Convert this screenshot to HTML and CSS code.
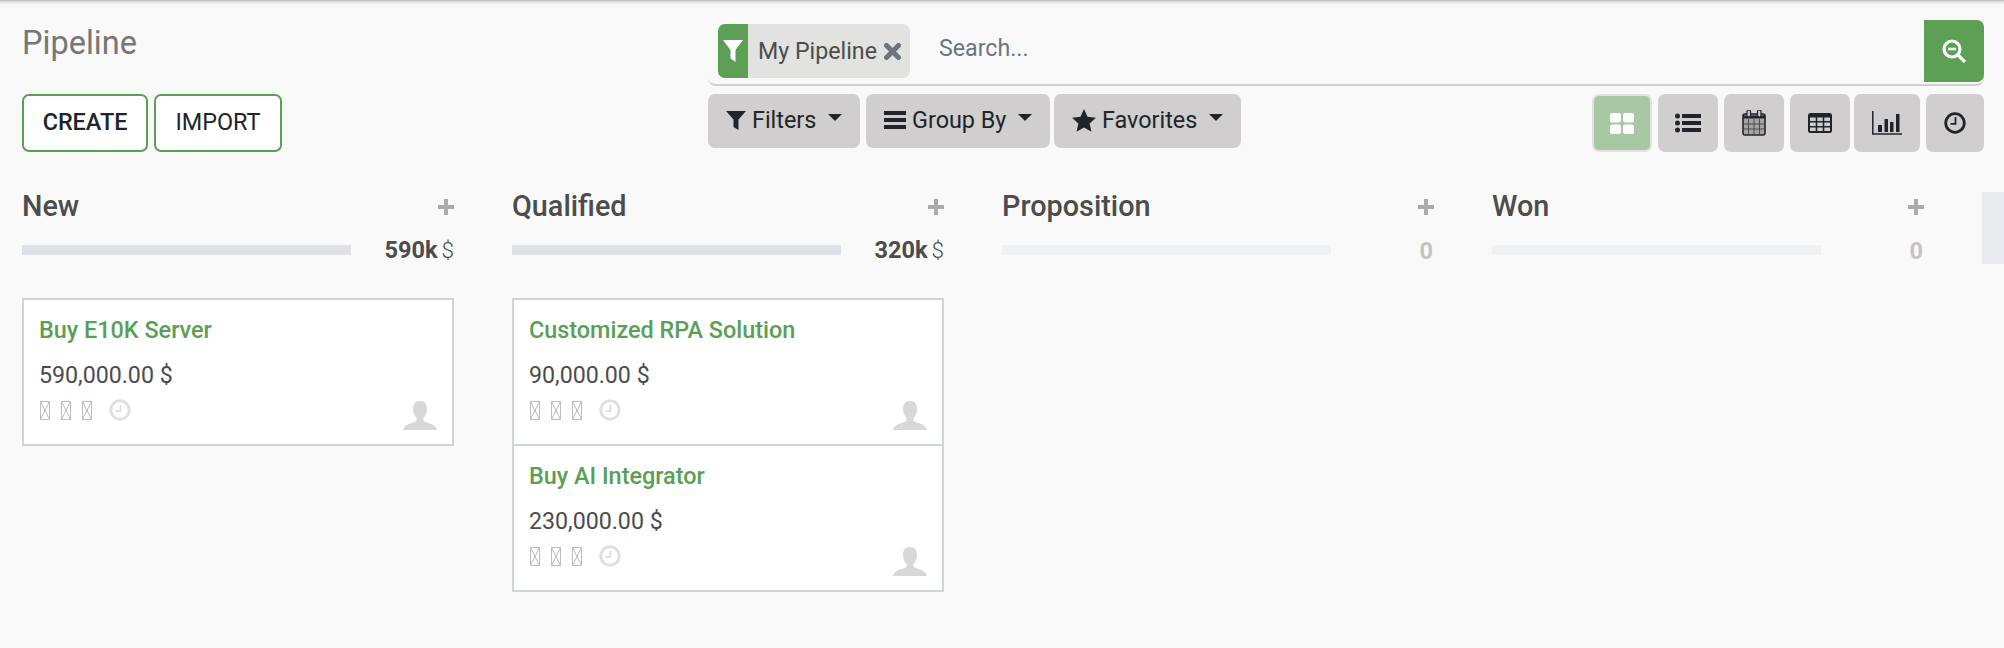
FILE: index.html
```html
<!doctype html>
<html>
    <head>
        <meta charset="utf-8">
        <title>Pipeline</title>
        <link rel="stylesheet" href="styles.css">
    </head>
    <body>
      <svg class="defs" width="0" height="0">
        <symbol id="tofu" viewBox="0 0 10 19">
          <path d="M.5.5h9v18h-9zM.5.5l9 18M9.5.5l-9 18" fill="none" stroke="currentColor" stroke-width="1"/>
        </symbol>
        <symbol id="clock" viewBox="0 0 22 22">
          <circle cx="11" cy="11" r="9.2" fill="none" stroke="currentColor" stroke-width="3"/>
          <path d="M11.5 5.5v6.5h-5" fill="none" stroke="currentColor" stroke-width="1.8"/>
        </symbol>
        <symbol id="person" viewBox="0 0 34 29">
          <path d="M17 0c5 0 7 3.500 7 8 0 4-1.500 7-3.500 9v3c2 1.500 13 3 13.500 9H0c.5-6 11.500-7.500 13.500-9v-3C11.500 15 10 12 10 8c0-4.500 2-8 7-8z" fill="currentColor"/>
        </symbol>
        <symbol id="plus" viewBox="0 0 16 16">
          <path d="M6 0h4v6h6v4h-6v6H6v-6H0V6h6z" fill="currentColor"/>
        </symbol>
      </svg>

      <header class="control-panel">
        <div class="cp-left">
          <h1>Pipeline</h1>
          <div class="cp-buttons">
            <button class="btn-outline btn-create">CREATE</button>
            <button class="btn-outline">IMPORT</button>
          </div>
        </div>
        <div class="cp-right">
          <div class="searchbar">
            <div class="facet">
              <span class="facet-icon">
                <svg width="20" height="24" viewBox="0 0 20 24"><path d="M0 1h20l-7.500 10v12l-5-3.500V11z" fill="#fff"/></svg>
              </span>
              <span class="facet-label">My Pipeline</span>
              <svg class="facet-close" width="17" height="17" viewBox="0 0 17 17"><path d="M2.500 2.500l12 12M14.500 2.500l-12 12" stroke="#6c757d" stroke-width="5" stroke-linecap="round"/></svg>
            </div>
            <span class="search-input">Search...</span>
            <span class="search-btn">
              <svg width="24" height="24" viewBox="0 0 24 24"><circle cx="10" cy="10" r="8" fill="none" stroke="#fff" stroke-width="3.200"/><path d="M6 10h8" stroke="#fff" stroke-width="2.600"/><path d="M16 16l7 7" stroke="#fff" stroke-width="3.200"/></svg>
            </span>
          </div>
          <div class="cp-tools">
            <div class="search-options">
              <button class="btn-tool btn-filters">
                <svg width="20" height="20" viewBox="0 0 20 20"><path d="M0 1h20l-7.500 8.500V20L7.500 17V9.500z" fill="#212529"/></svg>
                Filters<i class="caret"></i>
              </button>
              <button class="btn-tool btn-group">
                <svg width="22" height="22" viewBox="0 0 22 22"><path d="M0 2h22v4H0zM0 9h22v4H0zM0 16h22v4H0z" fill="#212529"/></svg>
                Group By<i class="caret"></i>
              </button>
              <button class="btn-tool btn-fav">
                <svg width="24" height="23" viewBox="0 0 24 23"><path d="M12 0l3.500 7.800 8.500.9-6.400 5.700 1.900 8.400L12 18.500 4.500 22.800l1.900-8.400L0 8.700l8.500-.9z" fill="#212529"/></svg>
                Favorites<i class="caret"></i>
              </button>
            </div>
            <div class="view-switch">
              <button class="btn-view active">
                <svg width="24" height="21" viewBox="0 0 24 21"><rect width="11" height="9.500" rx="2" fill="#fff"/><rect x="13" width="11" height="9.500" rx="2" fill="#fff"/><rect y="11.500" width="11" height="9.500" rx="2" fill="#fff"/><rect x="13" y="11.500" width="11" height="9.500" rx="2" fill="#fff"/></svg>
              </button>
              <button class="btn-view">
                <svg width="26" height="20" viewBox="0 0 26 20"><g fill="#212529"><circle cx="2.500" cy="3" r="2.500"/><circle cx="2.500" cy="10" r="2.500"/><circle cx="2.500" cy="17" r="2.500"/><rect x="7" y="1" width="19" height="4"/><rect x="7" y="8" width="19" height="4"/><rect x="7" y="15" width="19" height="4"/></g></svg>
              </button>
              <button class="btn-view">
                <svg width="24" height="26" viewBox="0 0 24 26"><rect x="1" y="4" width="22" height="21" rx="2" fill="#a5a3a3" stroke="#212529" stroke-width="1.600"/><path d="M1 7h22" stroke="#212529" stroke-width="3"/><path d="M6.500 9v15M12 9v15M17.500 9v15M2 14h20M2 19h20" stroke="#4d4d4d" stroke-width="1"/><rect x="5" y="0" width="3.500" height="7" rx="1.700" fill="#cfcdcd" stroke="#212529" stroke-width="1.200"/><rect x="15.500" y="0" width="3.500" height="7" rx="1.700" fill="#cfcdcd" stroke="#212529" stroke-width="1.200"/></svg>
              </button>
              <button class="btn-view">
                <svg width="24" height="20" viewBox="0 0 24 20"><rect width="24" height="20" rx="2.500" fill="#212529"/><path d="M2 4.500h5.700v3.500H2zM9.300 4.500h5.400v3.500H9.300zM16.300 4.500H22v3.500h-5.700zM2 9.500h5.700v3.500H2zM9.300 9.500h5.400v3.500H9.300zM16.300 9.500H22v3.500h-5.700zM2 14.500h5.700v3.500H2zM9.300 14.500h5.400v3.500H9.300zM16.300 14.500H22v3.500h-5.700z" fill="#cfcdcd"/></svg>
              </button>
              <button class="btn-view btn-graph">
                <svg width="30" height="24" viewBox="0 0 30 24"><path d="M.8 0v23H30" fill="none" stroke="#212529" stroke-width="1.500"/><path d="M6 14h4v7H6zM12.500 8h3.500v13h-3.500zM18 11h3.500v10H18zM24 3h3.500v18H24z" fill="#212529"/></svg>
              </button>
              <button class="btn-view btn-activity">
                <svg width="22" height="22" viewBox="0 0 22 22"><circle cx="11" cy="11" r="9.300" fill="none" stroke="#212529" stroke-width="2.800"/><path d="M11.500 5v6.800H6.500" fill="none" stroke="#212529" stroke-width="1.800"/></svg>
              </button>
            </div>
          </div>
        </div>
      </header>

      <main class="kanban">
        <section class="column">
          <div class="col-title"><span>New</span><svg class="col-add"><use href="#plus"/></svg></div>
          <div class="col-progress">
            <div class="bar"></div>
            <div class="total"><b>590k</b><span>$</span></div>
          </div>
          <article class="card">
            <div class="card-name">Buy E10K Server</div>
            <div class="card-price">590,000.00 $</div>
            <div class="card-foot">
              <div class="card-marks">
                <svg class="tofu"><use href="#tofu"/></svg>
                <svg class="tofu"><use href="#tofu"/></svg>
                <svg class="tofu"><use href="#tofu"/></svg>
                <svg class="card-clock"><use href="#clock"/></svg>
              </div>
              <svg class="avatar"><use href="#person"/></svg>
            </div>
          </article>
        </section>

        <section class="column">
          <div class="col-title"><span>Qualified</span><svg class="col-add"><use href="#plus"/></svg></div>
          <div class="col-progress">
            <div class="bar"></div>
            <div class="total"><b>320k</b><span>$</span></div>
          </div>
          <article class="card">
            <div class="card-name">Customized RPA Solution</div>
            <div class="card-price">90,000.00 $</div>
            <div class="card-foot">
              <div class="card-marks">
                <svg class="tofu"><use href="#tofu"/></svg>
                <svg class="tofu"><use href="#tofu"/></svg>
                <svg class="tofu"><use href="#tofu"/></svg>
                <svg class="card-clock"><use href="#clock"/></svg>
              </div>
              <svg class="avatar"><use href="#person"/></svg>
            </div>
          </article>
          <article class="card">
            <div class="card-name">Buy AI Integrator</div>
            <div class="card-price">230,000.00 $</div>
            <div class="card-foot">
              <div class="card-marks">
                <svg class="tofu"><use href="#tofu"/></svg>
                <svg class="tofu"><use href="#tofu"/></svg>
                <svg class="tofu"><use href="#tofu"/></svg>
                <svg class="card-clock"><use href="#clock"/></svg>
              </div>
              <svg class="avatar"><use href="#person"/></svg>
            </div>
          </article>
        </section>

        <section class="column empty">
          <div class="col-title"><span>Proposition</span><svg class="col-add"><use href="#plus"/></svg></div>
          <div class="col-progress">
            <div class="bar"></div>
            <div class="total"><b>0</b></div>
          </div>
        </section>

        <section class="column empty">
          <div class="col-title"><span>Won</span><svg class="col-add"><use href="#plus"/></svg></div>
          <div class="col-progress">
            <div class="bar"></div>
            <div class="total"><b>0</b></div>
          </div>
        </section>

        <div class="col-next"></div>
      </main>
    </body>
</html>
```

FILE: styles.css
```css
body {
  margin: 0;
  height: 648px;
  overflow: hidden;
  background: linear-gradient(#b8b8b8, #e4e4e4 2px, #f9f9f9 5px);
  font-family: Roboto, sans-serif;
  color: #212529;
}

.defs { position: absolute; }

button {
  font-family: inherit;
  color: inherit;
  cursor: pointer;
}

/* control panel */
.control-panel {
  display: flex;
  height: 152px;
  padding-left: 22px;
}

.cp-left {
  width: 686px;
  display: flex;
  flex-direction: column;
  justify-content: space-between;
}

h1 {
  margin: 24px 0 0;
  font-size: 32.5px;
  line-height: 38px;
  font-weight: 400;
  color: #777;
}

.cp-buttons {
  display: flex;
  gap: 6px;
}

.btn-outline {
  width: 128px;
  height: 58px;
  padding: 0 0 2px;
  background: #fff;
  border: 2px solid #5c9f55;
  border-radius: 7px;
  font-size: 23.4px;
}

.btn-create {
  width: 126px;
  font-weight: 500;
}

.cp-right {
  width: 1276px;
  padding-top: 20px;
}

.searchbar {
  display: flex;
  align-items: flex-start;
  height: 66px;
  box-sizing: border-box;
  padding-left: 10px;
  border-bottom: 2px solid #cfcfcf;
  border-radius: 0 0 8px 8px;
}

.facet {
  display: flex;
  align-items: center;
  width: 192px;
  height: 54px;
  margin-top: 4px;
  background: #e2e2e0;
  border-radius: 7px;
  font-size: 23.2px;
  color: #4c4c4c;
  overflow: hidden;
}

.facet-icon {
  display: flex;
  align-items: center;
  justify-content: center;
  width: 30px;
  height: 100%;
  background: #5c9f55;
}

.facet-label { margin-left: 10px; }

.facet-close { margin-left: 7px; }

.search-input {
  margin: 6px 0 0 29px;
  font-size: 23.2px;
  line-height: 44px;
  color: #6c757d;
  flex: 1;
}

.search-btn {
  display: flex;
  align-items: center;
  justify-content: center;
  width: 60px;
  height: 62px;
  background: #5c9f55;
  border-radius: 0 7px 7px 0;
}

.cp-tools {
  display: flex;
  justify-content: space-between;
  align-items: flex-start;
  margin-top: 8px;
}

.search-options {
  display: flex;
  gap: 5px;
}

.btn-tool {
  display: flex;
  align-items: center;
  height: 54px;
  padding: 0 0 2px 18px;
  background: #d0cece;
  border: 0;
  border-radius: 7px;
  font-size: 23.4px;
}

.btn-tool svg { margin-right: 6px; }

.btn-filters { width: 152px; }
.btn-group { width: 184px; margin-left: 1px; }
.btn-fav { width: 187px; margin-left: -1px; }

.caret {
  margin: -5px 0 0 12px;
  border-top: 7px solid #212529;
  border-left: 7px solid transparent;
  border-right: 7px solid transparent;
}

.view-switch {
  display: flex;
  gap: 6px;
}

.btn-view {
  display: flex;
  align-items: center;
  justify-content: center;
  width: 60px;
  height: 58px;
  padding: 0;
  background: #d0cece;
  border: 0;
  border-radius: 7px;
}

.btn-view.active {
  background: #a7c8a3;
  border: 2px solid #e2e2e0;
}

.btn-graph { width: 66px; margin-left: -2px; }
.btn-activity { width: 58px; }

/* kanban */
.kanban {
  display: flex;
  gap: 58px;
  padding: 36px 0 0 22px;
}

.column {
  width: 432px;
  flex: none;
}

.col-title {
  display: flex;
  justify-content: space-between;
  align-items: center;
  height: 36px;
  font-size: 28.8px;
  font-weight: 500;
  color: #4c4c4c;
}

.col-add {
  width: 16px;
  height: 16px;
  margin-top: 1px;
  color: #ababab;
}

.col-progress {
  display: flex;
  justify-content: space-between;
  align-items: center;
  height: 30px;
  margin: 11px 0 33px;
}

.bar {
  width: 329px;
  height: 10px;
  background: #dee2e6;
}

.total {
  display: flex;
  align-items: baseline;
  gap: 4px;
  font-size: 23.5px;
  color: #4c4c4c;
}

.total b { font-weight: 700; }

.total span { font-size: 22.5px; font-weight: 300; }

.empty .bar { background: #f0f1f3; }

.empty .total { color: #c4c4c4; padding: 2px 1px 0 0; }

.col-next {
  flex: none;
  width: 22px;
  height: 72px;
  margin-top: 4px;
  background: #e9eaee;
}

/* cards */
.card {
  box-sizing: border-box;
  height: 148px;
  padding: 15px 15px 14px;
  background: #fff;
  border: 2px solid #ced4da;
}

.card + .card { margin-top: -2px; }

.card-name {
  font-size: 23.4px;
  line-height: 30px;
  font-weight: 500;
  color: #5a9f53;
}

.card-price {
  margin-top: 15px;
  font-size: 23.2px;
  line-height: 30px;
  color: #4c4c4c;
}

.card-foot {
  display: flex;
  justify-content: space-between;
  margin-top: 9px;
  height: 31px;
}

.card-marks {
  display: flex;
  gap: 11px;
  padding-left: 1px;
}

.tofu {
  width: 10px;
  height: 19px;
  margin-top: 2px;
  color: #bdbdbd;
}

.card-clock {
  width: 22px;
  height: 22px;
  margin-left: 6px;
  color: #e0e0e0;
}

.avatar {
  width: 34px;
  height: 29px;
  margin-top: 2px;
  color: #d8d8d8;
}
```
